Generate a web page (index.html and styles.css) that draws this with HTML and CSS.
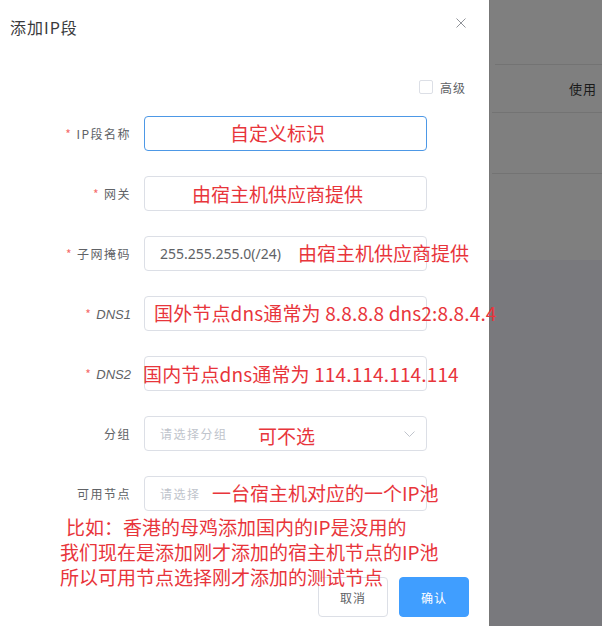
FILE: index.html
```html
<!DOCTYPE html>
<html lang="zh-CN">
<head>
<meta charset="utf-8">
<title>添加IP段</title>
<link rel="stylesheet" href="styles.css">
</head>
<body>
<div class="page">
  <div class="drawer">
    <div class="header">
      <span class="title">添加IP段</span>
      <svg class="close" width="10" height="10" viewBox="0 0 10 10"><path d="M0.5 0.5 L9.5 9.5 M9.5 0.5 L0.5 9.5" stroke="#909399" stroke-width="1" fill="none"/></svg>
    </div>
    <div class="adv-row">
      <span class="checkbox"></span>
      <span class="adv-text">高级</span>
    </div>
    <div class="form">
      <div class="form-item">
        <label class="label"><span class="req">*</span>IP段名称</label>
        <div class="input focus"></div>
      </div>
      <div class="form-item">
        <label class="label"><span class="req">*</span>网关</label>
        <div class="input"></div>
      </div>
      <div class="form-item">
        <label class="label"><span class="req">*</span>子网掩码</label>
        <div class="input"><span class="value">255.255.255.0(/24)</span></div>
      </div>
      <div class="form-item">
        <label class="label"><span class="req">*</span><i class="latin">DNS1</i></label>
        <div class="input"></div>
      </div>
      <div class="form-item">
        <label class="label"><span class="req">*</span><i class="latin">DNS2</i></label>
        <div class="input"></div>
      </div>
      <div class="form-item">
        <label class="label">分组</label>
        <div class="input select"><span class="placeholder">请选择分组</span>
          <svg class="arrow" width="11" height="6" viewBox="0 0 11 6"><path d="M0.5 0.5 L5.5 5.5 L10.5 0.5" stroke="#c0c4cc" stroke-width="1" fill="none"/></svg>
        </div>
      </div>
      <div class="form-item">
        <label class="label">可用节点</label>
        <div class="input"><span class="placeholder">请选择</span></div>
      </div>
    </div>
    <div class="footer">
      <button class="btn">取消</button>
      <button class="btn primary">确认</button>
    </div>

    <div class="note n1">自定义标识</div>
    <div class="note n2">由宿主机供应商提供</div>
    <div class="note n3">由宿主机供应商提供</div>
    <div class="note n4">国外节点dns通常为 8.8.8.8 dns2:8.8.4.4</div>
    <div class="note n5">国内节点dns通常为 114.114.114.114</div>
    <div class="note n6">可不选</div>
    <div class="note n7">一台宿主机对应的一个IP池</div>
    <div class="note n8">
      <div class="l1">比如：香港的母鸡添加国内的IP是没用的</div>
      <div>我们现在是添加刚才添加的宿主机节点的IP池</div>
      <div>所以可用节点选择刚才添加的测试节点</div>
    </div>
  </div>
  <div class="backdrop">
    <div class="table-top">
      <div class="rule r1"></div>
      <div class="thead"><span class="th">使用</span></div>
      <div class="rule r2"></div>
      <div class="trow"></div>
      <div class="rule r3"></div>
    </div>
    <div class="table-rest"></div>
  </div>
</div>
</body>
</html>
```

FILE: styles.css
```css
* { box-sizing: border-box; }
html, body { margin: 0; padding: 0; }
body {
  width: 602px;
  height: 626px;
  overflow: hidden;
  font-family: "Noto Sans", "Noto Sans CJK SC", sans-serif;
  background: #fff;
}
.page {
  display: flex;
  width: 602px;
  height: 626px;
}
.drawer {
  position: relative;
  width: 489px;
  flex: none;
  background: #fff;
  padding: 0 20px 0 0;
}
.header {
  height: 54px;
  display: flex;
  justify-content: space-between;
  align-items: flex-start;
  padding-left: 10px;
}
.title {
  margin-top: 16px;
  font-size: 16px;
  line-height: 22px;
  letter-spacing: 1px;
  color: #3a3a3c;
  font-family: "Noto Sans CJK SC", sans-serif;
}
.close {
  margin-top: 18px;
  margin-right: 3px;
}
.adv-row {
  margin-top: 26px;
  height: 14px;
  display: flex;
  justify-content: flex-end;
  align-items: center;
  gap: 7px;
  padding-right: 3px;
}
.checkbox {
  width: 14px;
  height: 14px;
  border: 1px solid #dcdfe6;
  border-radius: 2px;
  background: #fff;
}
.adv-text {
  font-size: 12px;
  letter-spacing: 1px;
  color: #606266;
  font-family: "Noto Sans CJK SC", sans-serif;
}
.form {
  margin-top: 22px;
  display: flex;
  flex-direction: column;
  gap: 25px;
}
.form-item {
  display: flex;
  align-items: center;
  height: 35px;
}
.label {
  width: 144px;
  flex: none;
  padding-right: 13px;
  text-align: right;
  font-size: 12px;
  letter-spacing: 1.5px;
  color: #606266;
  font-family: "Noto Sans CJK SC", sans-serif;
}
.req {
  color: #f56c6c;
  margin-right: 4px;
}
.latin {
  font-family: "Liberation Sans", sans-serif;
  letter-spacing: 0;
  font-size: 13px;
}
.input {
  width: 283px;
  height: 35px;
  border: 1px solid #dcdfe6;
  border-radius: 4px;
  display: flex;
  align-items: center;
  padding: 0 11px 0 15px;
  position: relative;
}
.input.focus { border-color: #4d98e6; }
.value {
  font-size: 14px;
  color: #606266;
  font-family: "Noto Sans", sans-serif;
}
.placeholder {
  font-size: 12px;
  letter-spacing: 1.5px;
  color: #c0c4cc;
  font-family: "Noto Sans CJK SC", sans-serif;
}
.select { justify-content: space-between; }
.arrow { margin-top: 1px; }
.footer {
  margin-top: 66px;
  display: flex;
  justify-content: flex-end;
  gap: 11px;
}
.btn {
  width: 70px;
  height: 40px;
  border: 1px solid #dcdfe6;
  border-radius: 4px;
  background: #fff;
  color: #606266;
  font-size: 12px;
  letter-spacing: 1px;
  font-family: "Noto Sans CJK SC", sans-serif;
  padding: 0;
}
.btn.primary {
  background: #409eff;
  border-color: #409eff;
  color: #fff;
}
.note {
  position: absolute;
  font-family: "Noto Sans CJK SC", sans-serif;
  font-size: 19px;
  line-height: 24px;
  color: #e8353b;
  white-space: nowrap;
}
.n1 { left: 230px; top: 121px; }
.n2 { left: 192px; top: 182px; }
.n3 { left: 298px; top: 241px; }
.n4 { left: 154px; top: 301px; letter-spacing: 0.15px; }
.n5 { left: 143px; top: 362px; letter-spacing: 0.15px; }
.n6 { left: 258px; top: 424px; }
.n7 { left: 212px; top: 481px; }
.n8 { left: 60px; top: 514px; line-height: 25px; }
.n8 .l1 { padding-left: 6px; }
.backdrop {
  flex: 1;
  display: flex;
  flex-direction: column;
  overflow: hidden;
  border-left: 1px solid #777;
}
.table-top {
  height: 260px;
  background: #7f7f7f;
  padding-top: 64px;
}
.table-rest {
  flex: 1;
  background: #79797d;
}
.rule {
  height: 1px;
  background: #737373;
  margin-left: 2px;
}
.r1 { margin-left: 5px; }
.thead {
  height: 47px;
  display: flex;
  align-items: center;
  padding-left: 79px;
  white-space: nowrap;
}
.th {
  font-size: 13px;
  letter-spacing: 1px;
  color: #1a1a1a;
  font-family: "Noto Sans CJK SC", sans-serif;
}
.trow { height: 60px; }
```
